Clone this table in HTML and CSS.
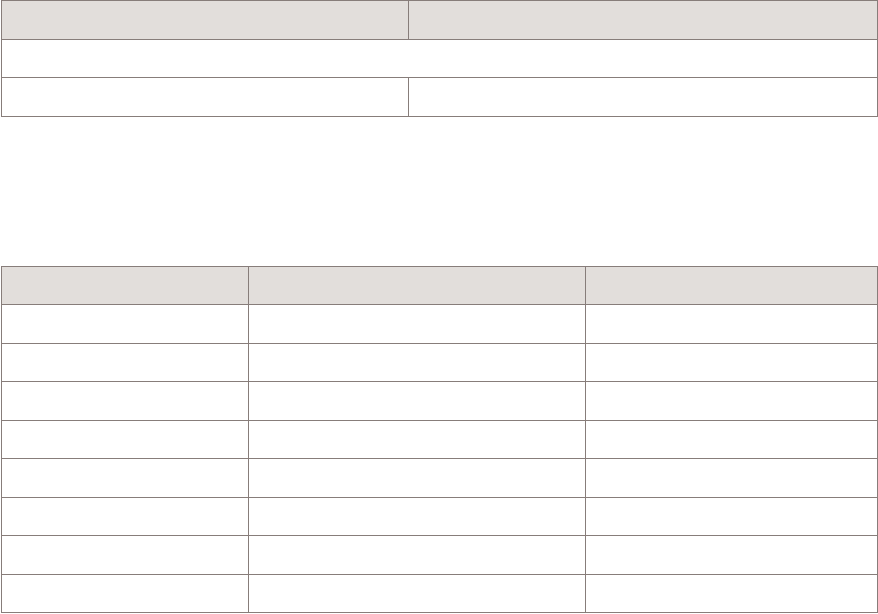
FILE: index.html
```html
<!DOCTYPE html>
<html>
<head>
<meta charset="utf-8">
<link rel="stylesheet" href="styles.css">
</head>
<body>
<table class="grid grid-top">
  <colgroup><col class="c1a"><col class="c1b"></colgroup>
  <tr class="head"><th></th><th></th></tr>
  <tr><td colspan="2"></td></tr>
  <tr><td></td><td></td></tr>
</table>
<table class="grid grid-bottom">
  <colgroup><col class="c2a"><col class="c2b"><col class="c2c"></colgroup>
  <tr class="head"><th></th><th></th><th></th></tr>
  <tr><td></td><td></td><td></td></tr>
  <tr><td></td><td></td><td></td></tr>
  <tr><td></td><td></td><td></td></tr>
  <tr><td></td><td></td><td></td></tr>
  <tr><td></td><td></td><td></td></tr>
  <tr><td></td><td></td><td></td></tr>
  <tr><td></td><td></td><td></td></tr>
  <tr><td></td><td></td><td></td></tr>
</table>
</body>
</html>
```
FILE: styles.css
```css
html, body {
  margin: 0;
  padding: 0;
  background: #ffffff;
  font-family: "Liberation Sans", Arial, sans-serif;
}
body {
  padding: 0 0 0 1px;
}
.grid {
  width: 877px;
  box-sizing: border-box;
  border-collapse: separate;
  border-spacing: 0;
  table-layout: fixed;
  border-top: 1px solid #877d7a;
  border-left: 1px solid #877d7a;
}
.grid th, .grid td {
  border-right: 1px solid #877d7a;
  border-bottom: 1px solid #877d7a;
  padding: 0;
  box-sizing: border-box;
}
.grid-top th, .grid-top td {
  height: 38.67px;
}
.grid-bottom th, .grid-bottom td {
  height: 38.5px;
}
.grid .head th {
  background: #e2dedb;
}
.grid-bottom {
  margin-top: 149px;
}
.c1a { width: 407px; }
.c1b { width: 469px; }
.c2a { width: 247px; }
.c2b { width: 337px; }
.c2c { width: 292px; }
```
